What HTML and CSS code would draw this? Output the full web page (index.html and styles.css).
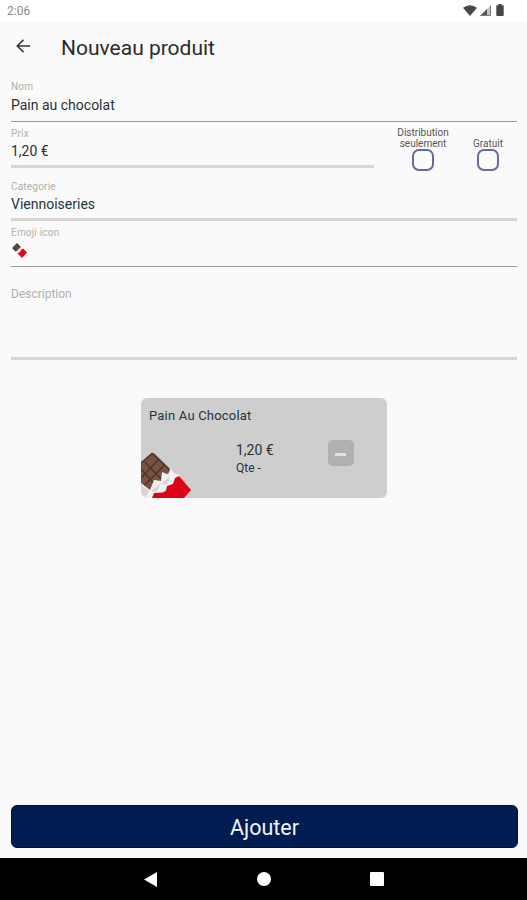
FILE: index.html
```html
<!DOCTYPE html>
<html lang="fr">
<head>
    <meta charset="UTF-8">
    <meta name="viewport" content="width=device-width, initial-scale=1.0">
    <title>Nouveau produit</title>
    <link rel="stylesheet" href="styles.css">
</head>
<body>
    <div class="status-bar">
        <span>2:06</span>
        <div class="status-icons">
            <svg width="14" height="11" viewBox="0 0 14 11"><path d="M0 2.8 Q7 -2.2 14 2.8 L7 11 Z" fill="#484848"/></svg>
            <svg width="11" height="11" viewBox="0 0 11 11"><path d="M0 11 L11 0 V11 Z" fill="#c4c4c4"/><path d="M0 11 L7 4 V11 Z" fill="#555"/><path d="M10.5 1 V10.5 H1" fill="none" stroke="#777"/></svg>
            <svg width="8" height="12" viewBox="0 0 8 12"><path d="M2.3 0 H5.7 V1.3 H7 Q7.7 1.3 7.7 2 V11 Q7.7 12 7 12 H1 Q.3 12 .3 11 V2 Q.3 1.3 1 1.3 H2.3 Z" fill="#484848"/></svg>
        </div>
    </div>

    <div class="app-bar">
        <svg width="15" height="14" viewBox="0 0 15 14" fill="none" stroke="#333" stroke-width="1.6"><path d="M14 7 H1.5 M7.5 .8 L1.3 7 L7.5 13.2"/></svg>
        <h1>Nouveau produit</h1>
    </div>

    <form class="product-form">
        <div class="field thin">
            <label>Nom</label>
            <div class="value">Pain au chocolat</div>
        </div>
        <div class="price-row">
            <div class="field price">
                <label>Prix</label>
                <div class="value">1,20 €</div>
            </div>
            <div class="check distribution">
                <span>Distribution<br>seulement</span>
                <div class="box"></div>
            </div>
            <div class="check free">
                <span>Gratuit</span>
                <div class="box"></div>
            </div>
        </div>
        <div class="field category">
            <label>Categorie</label>
            <div class="value">Viennoiseries</div>
        </div>
        <div class="field thin emoji">
            <label>Emoji icon</label>
            <div class="value"><svg width="15" height="15" viewBox="0 0 15 15"><path d="M0 5 L5 0 L9 4 L4 9 Z" fill="#593a35"/><path d="M2 5 L5 2 M4 7 L7 4 M3 3 L6 6" stroke="#806059" stroke-width=".7"/><path d="M4 9 L9 4 L11 6 L6 11 Z" fill="#f4eeee"/><path d="M5.5 10.5 L8 9 L9 7 L11 5.5 L15 9.5 L10 15 Z" fill="#dc0a1c"/></svg></div>
        </div>
        <div class="field description">
            <label>Description</label>
        </div>
    </form>

    <div class="card">
        <div class="card-title">Pain Au Chocolat</div>
        <div class="card-body">
            <svg class="card-emoji" width="50" height="46" viewBox="0 0 50 46">
                <path d="M0 11 L10 2 Q12 0 14 2 L30 18 L10 40 L0 32 Z" fill="#7a5244"/>
                <path d="M0 11 L11 1.5 L29 18 M4 10 L20 27 M0 17 L14 33 M18 7 L0 26 M24 12.5 L3 34" fill="none" stroke="#4e342a" stroke-width="1.4"/>
                <path d="M0 31 L9 38 L13 28 L20 29 L21 20 L28 23 L29 16 L33 21 L39 23 L38 27 L14 46 H5 Q0 45 0 39 Z" fill="#f3f2f1"/>
                <path d="M0 32 L8 39 L5 45 Q0 44 0 38 Z M10 39 L20 31 L16 40 Z M20 32 L29 24 L26 33 Z" fill="#d8d5d3"/>
                <path d="M11 46 L13 41 L22 40.5 L25 39 L26 34 L32 32 L34 26 L38 24 L50 38 L43 46 Z" fill="#dc0418"/>
            </svg>
            <div class="card-info">
                <div class="card-price">1,20 €</div>
                <div class="card-qty">Qte -</div>
            </div>
            <div class="minus"></div>
        </div>
    </div>

    <button class="add" type="button">Ajouter</button>

    <div class="nav-bar">
        <svg width="13" height="15" viewBox="0 0 13 15"><path d="M13 0 V15 L0 7.5 Z" fill="#fff"/></svg>
        <svg width="14" height="14" viewBox="0 0 14 14"><circle cx="7" cy="7" r="7" fill="#fff"/></svg>
        <svg width="14" height="14" viewBox="0 0 14 14"><rect width="14" height="14" rx="1" fill="#fff"/></svg>
    </div>
</body>
</html>
```
FILE: styles.css
```css
* {
    box-sizing: border-box;
}
body {
    margin: 0;
    height: 900px;
    display: flex;
    flex-direction: column;
    overflow: hidden;
    font-family: Roboto, sans-serif;
    color: #263238;
    background-color: #fafafa;
}
svg {
    display: block;
}
.status-bar {
    display: flex;
    justify-content: space-between;
    align-items: center;
    height: 22px;
    padding: 0 23px 0 7px;
    background-color: #fff;
    color: #8a8a8a;
    font-size: 12px;
}
.status-icons {
    display: flex;
    align-items: center;
    gap: 3px;
    margin-top: -2px;
}
.status-icons svg:last-child {
    margin-left: 2px;
}
.app-bar {
    display: flex;
    align-items: center;
    gap: 30px;
    height: 50px;
    padding-left: 16px;
}
.app-bar svg {
    margin-top: -2px;
}
.app-bar h1 {
    margin: 1px 0 0;
    font-size: 21px;
    font-weight: 400;
    color: #2b2b2b;
}
.product-form {
    padding: 9px 10px 0 11px;
}
.field {
    height: 41px;
    border-bottom: 3px solid #d6d6d6;
}
.field.thin {
    border-bottom: 1px solid #999;
}
.field label {
    display: block;
    height: 12px;
    font-size: 10px;
    line-height: 12px;
    letter-spacing: 0.2px;
    color: #b0b0b0;
}
.value {
    margin-top: 4px;
    font-size: 14px;
    line-height: 16px;
}
.price-row {
    display: flex;
    height: 46px;
    padding-top: 5px;
}
.price {
    width: 363px;
}
.price label,
.category label,
.emoji label {
    padding-top: 1px;
}
.check {
    display: flex;
    flex-direction: column;
    align-items: center;
    justify-content: flex-end;
    font-size: 10px;
    line-height: 11px;
    text-align: center;
    color: #555;
    height: 44px;
}
.distribution {
    width: 60px;
    margin-left: 19px;
}
.free {
    width: 40px;
    margin-left: 15px;
}
.box {
    width: 22px;
    height: 22px;
    border: 2px solid #686a9a;
    border-radius: 7px;
}
.category {
    margin-top: 12px;
}
.emoji {
    margin-top: 5px;
}
.emoji .value {
    padding: 1px 0 0 1px;
}
.description {
    height: 73px;
    margin-top: 20px;
}
.description label {
    padding-top: 1px;
    font-size: 12px;
    letter-spacing: 0;
}
.card {
    width: 246px;
    height: 100px;
    margin: 38px 0 0 141px;
    border-radius: 6px;
    overflow: hidden;
    background-color: #cecece;
}
.card-title {
    height: 42px;
    padding: 9px 8px 0;
    font-size: 13px;
    line-height: 17px;
    letter-spacing: 0.2px;
}
.card-body {
    display: flex;
    height: 58px;
}
.card-emoji {
    align-self: flex-end;
}
.card-info {
    width: 92px;
    margin-left: 45px;
}
.card-price {
    margin-top: 2px;
    font-size: 14px;
    line-height: 17px;
}
.card-qty {
    margin-top: 2px;
    font-size: 12px;
    line-height: 15px;
}
.minus {
    display: flex;
    align-items: center;
    justify-content: center;
    width: 26px;
    height: 26px;
    border-radius: 5px;
    background-color: #b0b0b0;
}
.minus::before {
    content: "";
    width: 11px;
    height: 3px;
    margin: 2px 2px 0 0;
    background-color: #e2e2e2;
}
.add {
    height: 43px;
    margin: auto 9px 10px 11px;
    padding: 1px 0 0;
    border: 1px solid #000c40;
    border-radius: 6px;
    background-color: #001d52;
    color: #f2f4f8;
    font-family: inherit;
    font-size: 21.5px;
}
.nav-bar {
    display: flex;
    align-items: center;
    gap: 99.5px;
    height: 42px;
    padding-left: 144px;
    background-color: #000;
}
```
